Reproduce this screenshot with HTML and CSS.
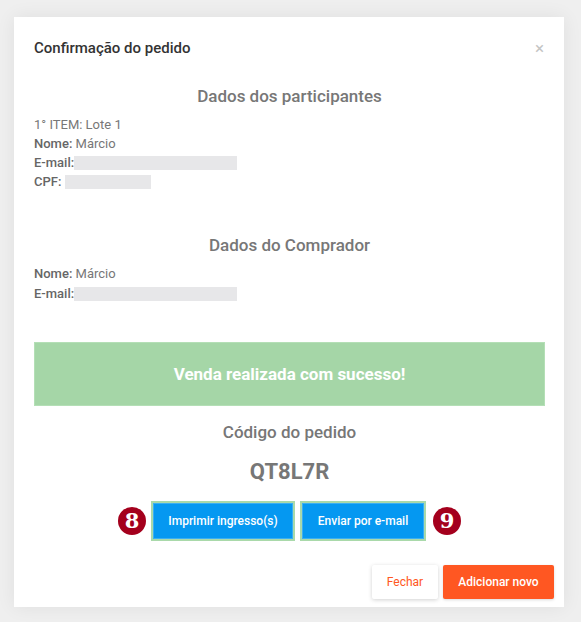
FILE: index.html
```html
<!DOCTYPE html>
<html>
<head>
    <title>Confirmação do pedido</title>
    <link rel="stylesheet" href="styles.css">
</head>
<body>
    <div class="modal">
        <div class="modal-header">
            <span class="modal-title">Confirmação do pedido</span>
            <span class="close">&times;</span>
        </div>

        <div class="modal-body">
            <!-- Participantes -->
            <h3 class="section-title first">Dados dos participantes</h3>
            <div class="info">
                <div>1° ITEM: Lote 1</div>
                <div><b>Nome:</b> Márcio</div>
                <div><b>E-mail:</b><span class="hidden email"></span></div>
                <div><b>CPF:</b> <span class="hidden cpf"></span></div>
            </div>

            <!-- Comprador -->
            <h3 class="section-title second">Dados do Comprador</h3>
            <div class="info buyer">
                <div><b>Nome:</b> Márcio</div>
                <div><b>E-mail:</b><span class="hidden email"></span></div>
            </div>

            <div class="alert">Venda realizada com sucesso!</div>

            <div class="code-label">Código do pedido</div>
            <div class="code">QT8L7R</div>

            <div class="actions">
                <span class="badge">8</span>
                <button class="btn-blue print">Imprimir ingresso(s)</button>
                <button class="btn-blue mail">Enviar por e-mail</button>
                <span class="badge">9</span>
            </div>
        </div>

        <div class="modal-footer">
            <button class="btn-close">Fechar</button>
            <button class="btn-add">Adicionar novo</button>
        </div>
    </div>
</body>
</html>
```

FILE: styles.css
```css
body {
    margin: 0;
    background-color: #efefef;
    font-family: Roboto, "Liberation Sans", sans-serif;
    height: 622px;
}

/* Modal box */
.modal {
    width: 550px;
    margin: 17px 0 0 14px;
    background-color: #fff;
    box-shadow: 0 0 18px rgba(0, 0, 0, 0.07);
    padding-bottom: 8px;
}

.modal-header {
    display: flex;
    justify-content: space-between;
    align-items: center;
    padding: 22px 20px 0 20px;
    line-height: 18px;
}

.modal-title {
    font-size: 15px;
    font-weight: 500;
    color: #333;
}

.close {
    font-size: 17px;
    color: #c4c4c4;
}

.modal-body {
    padding: 0 19px 0 20px;
}

/* Section titles */
.section-title {
    margin: 0;
    text-align: center;
    font-size: 17px;
    line-height: 20px;
    font-weight: 500;
    color: #777;
}

.section-title.first {
    margin-top: 29px;
}

.section-title.second {
    margin-top: 44px;
}

.info {
    margin-top: 9px;
    font-size: 13px;
    line-height: 19px;
    color: #777;
}

.info b {
    font-weight: 500;
    color: #666;
}

.info.buyer {
    margin-top: 9px;
    line-height: 20px;
}

.hidden {
    display: inline-block;
    vertical-align: middle;
    height: 14px;
    background-color: #e7e7e9;
    margin-top: -2px;
}

.hidden.email {
    width: 163px;
}

.hidden.cpf {
    width: 86px;
}

/* Success alert */
.alert {
    margin-top: 38px;
    height: 64px;
    line-height: 63px;
    background-color: #a5d6a7;
    border: 1px solid #b4dfb6;
    box-sizing: border-box;
    text-align: center;
    color: #fff;
    font-size: 17px;
    font-weight: 700;
}

.code-label {
    margin-top: 16px;
    text-align: center;
    font-size: 17px;
    line-height: 20px;
    font-weight: 500;
    color: #777;
}

.code {
    margin-top: 17px;
    text-align: center;
    font-size: 22px;
    line-height: 26px;
    font-weight: 700;
    color: #777;
}

/* Print / mail buttons */
.actions {
    margin-top: 16px;
    display: flex;
    justify-content: center;
    align-items: center;
    gap: 5px;
}

.btn-blue {
    height: 40px;
    border: 2px solid #a9d9aa;
    background-color: #0598f1;
    box-shadow: inset 0 0 0 1px #3aaef3;
    color: #fff;
    font-family: Roboto, "Liberation Sans", sans-serif;
    font-size: 12px;
    font-weight: 500;
    padding: 0;
}

.btn-blue.print {
    width: 144px;
}

.btn-blue.mail {
    width: 126px;
}

.badge {
    width: 28px;
    height: 28px;
    border-radius: 50%;
    background-color: #a4001d;
    color: #fff;
    font-family: "DejaVu Serif", "Liberation Serif", serif;
    font-weight: 700;
    font-size: 21px;
    line-height: 28px;
    text-align: center;
}

.badge:last-child {
    margin-left: 2px;
}

/* Footer */
.modal-footer {
    margin-top: 24px;
    padding-right: 10px;
    display: flex;
    justify-content: flex-end;
    gap: 5px;
}

.modal-footer button {
    height: 34px;
    border: none;
    border-radius: 2px;
    font-family: Roboto, "Liberation Sans", sans-serif;
    font-size: 12px;
    padding: 0;
}

.btn-close {
    width: 66px;
    background-color: #fff;
    color: #ff5722;
    box-shadow: 0 1px 4px rgba(0, 0, 0, 0.18);
}

.btn-add {
    width: 111px;
    background-color: #ff5722;
    color: #fff;
    font-weight: 500;
    box-shadow: 0 1px 3px rgba(0, 0, 0, 0.15);
}
```
